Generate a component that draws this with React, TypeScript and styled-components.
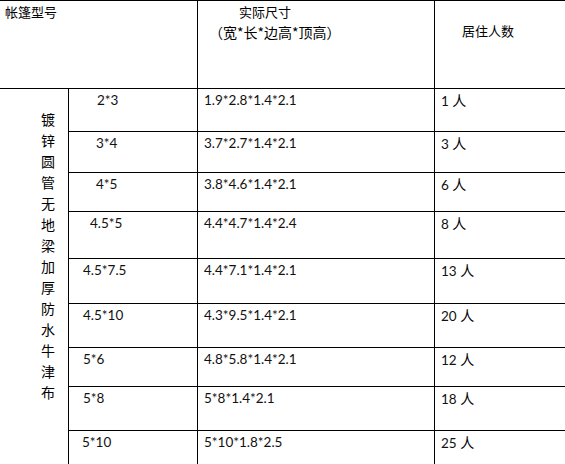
import React from "react";
import styled, { createGlobalStyle } from "styled-components";

const GlobalStyle = createGlobalStyle`
  html, body {
    margin: 0;
    padding: 0;
    background: #fff;
  }
  body {
    font-family: Lato, "Noto Sans CJK SC", sans-serif;
    color: #111;
  }
`;

const rows = [
  { model: "2*3", size: "1.9*2.8*1.4*2.1", people: "1", pad: 28, h: 43 },
  { model: "3*4", size: "3.7*2.7*1.4*2.1", people: "3", pad: 27, h: 41 },
  { model: "4*5", size: "3.8*4.6*1.4*2.1", people: "6", pad: 27, h: 39 },
  { model: "4.5*5", size: "4.4*4.7*1.4*2.4", people: "8", pad: 21, h: 47 },
  { model: "4.5*7.5", size: "4.4*7.1*1.4*2.1", people: "13", pad: 14, h: 45 },
  { model: "4.5*10", size: "4.3*9.5*1.4*2.1", people: "20", pad: 14, h: 44 },
  { model: "5*6", size: "4.8*5.8*1.4*2.1", people: "12", pad: 14, h: 39 },
  { model: "5*8", size: "5*8*1.4*2.1", people: "18", pad: 14, h: 44 },
  { model: "5*10", size: "5*10*1.8*2.5", people: "25", pad: 13, h: 0 },
];

const Table = styled.div<{ $rows: string }>`
  display: grid;
  grid-template-columns: 68px 129px 237px 1fr;
  grid-template-rows: ${(p) => p.$rows};
  width: 565px;
  height: 464px;
  overflow: hidden;
`;

const Cell = styled.div<{ $left?: boolean; $pad?: number }>`
  box-sizing: border-box;
  border-top: 1px solid #000;
  border-left: ${(p) => (p.$left ? "1px solid #000" : "none")};
  padding: 3px 0 0 ${(p) => p.$pad ?? 6}px;
  font-size: 13.5px;
  line-height: 16px;
  white-space: nowrap;
  min-width: 0;
`;

const HeadCell = styled(Cell)<{ $top?: number }>`
  font-family: "Noto Sans CJK SC", sans-serif;
  font-size: 13px;
  padding-top: ${(p) => p.$top ?? 3}px;
  line-height: 20px;
  color: #000;
`;

const ModelHead = styled(HeadCell)`
  grid-column: 1 / span 2;
`;

const HeadLine = styled.div<{ $indent: number; $size?: number }>`
  padding-left: ${(p) => p.$indent}px;
  font-size: ${(p) => p.$size ?? 13}px;
`;

const SideCell = styled(Cell)`
  grid-column: 1;
  grid-row: 2 / span ${rows.length};
  padding: 20px 0 0 41px;
`;

const VerticalText = styled.div`
  width: 14px;
  font-family: "Noto Sans CJK SC", sans-serif;
  font-size: 14px;
  line-height: 21px;
  white-space: normal;
  word-break: break-all;
  color: #000;
`;

const Unit = styled.span`
  font-family: "Noto Sans CJK SC", sans-serif;
  font-size: 14px;
  color: #000;
`;

export default function App() {
  const tracks =
    "88px " +
    rows.map((r) => (r.h ? `${r.h}px` : "1fr")).join(" ");

  return (
    <>
      <GlobalStyle />
      <Table $rows={tracks}>
        <ModelHead $pad={5} $top={1}>
          帐篷型号
        </ModelHead>
        <HeadCell $left $pad={0} $top={1}>
          <HeadLine $indent={41}>实际尺寸</HeadLine>
          <HeadLine $indent={11} $size={14}>
            （宽*长*边高*顶高）
          </HeadLine>
        </HeadCell>
        <HeadCell $left $pad={27} $top={20}>
          居住人数
        </HeadCell>

        <SideCell>
          <VerticalText>镀锌圆管无地梁加厚防水牛津布</VerticalText>
        </SideCell>

        {rows.map((r) => (
          <React.Fragment key={r.model}>
            <Cell $left $pad={r.pad}>
              {r.model}
            </Cell>
            <Cell $left $pad={6}>
              {r.size}
            </Cell>
            <Cell $left $pad={6}>
              {r.people} <Unit>人</Unit>
            </Cell>
          </React.Fragment>
        ))}
      </Table>
    </>
  );
}
